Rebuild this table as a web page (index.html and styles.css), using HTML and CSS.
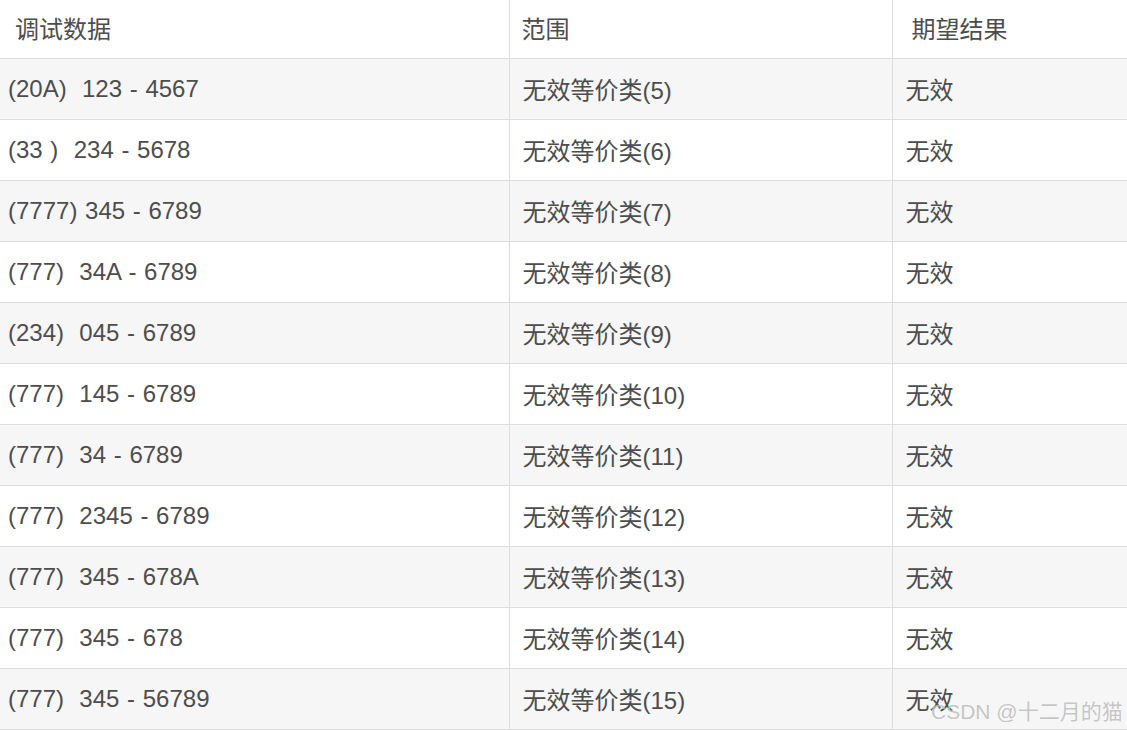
FILE: index.html
```html
<!DOCTYPE html>
<html lang="zh">
<head>
<meta charset="utf-8">
<link rel="stylesheet" href="styles.css">
</head>
<body>
<div class="wrap">
<table class="grid">
<colgroup><col class="c1"><col class="c2"><col class="c3"></colgroup>
<thead>
<tr><th class="h1">调试数据</th><th class="h2">范围</th><th class="h3">期望结果</th></tr>
</thead>
<tbody>
<tr><td class="d1">(20A)&nbsp; 123 - 4567</td><td>无效等价类(5)</td><td>无效</td></tr>
<tr><td class="d1">(33 )&nbsp; 234 - 5678</td><td>无效等价类(6)</td><td>无效</td></tr>
<tr><td class="d1">(7777) 345 - 6789</td><td>无效等价类(7)</td><td>无效</td></tr>
<tr><td class="d1">(777)&nbsp; 34A - 6789</td><td>无效等价类(8)</td><td>无效</td></tr>
<tr><td class="d1">(234)&nbsp; 045 - 6789</td><td>无效等价类(9)</td><td>无效</td></tr>
<tr><td class="d1">(777)&nbsp; 145 - 6789</td><td>无效等价类(10)</td><td>无效</td></tr>
<tr><td class="d1">(777)&nbsp; 34 - 6789</td><td>无效等价类(11)</td><td>无效</td></tr>
<tr><td class="d1">(777)&nbsp; 2345 - 6789</td><td>无效等价类(12)</td><td>无效</td></tr>
<tr><td class="d1">(777)&nbsp; 345 - 678A</td><td>无效等价类(13)</td><td>无效</td></tr>
<tr><td class="d1">(777)&nbsp; 345 - 678</td><td>无效等价类(14)</td><td>无效</td></tr>
<tr><td class="d1">(777)&nbsp; 345 - 56789</td><td>无效等价类(15)</td><td>无效</td></tr>
</tbody>
</table>
<div class="watermark">CSDN @十二月的猫</div>
</div>
</body>
</html>
```

FILE: styles.css
```css
html, body {
  margin: 0;
  padding: 0;
  background: #ffffff;
}
.wrap {
  position: relative;
  width: 1127px;
  height: 730px;
  overflow: hidden;
}
.grid {
  border-collapse: collapse;
  table-layout: fixed;
  width: 1140px;
  font-family: "Liberation Sans", Arial, "Noto Sans CJK SC", sans-serif;
  font-size: 24px;
  color: #4d4d4d;
}
.c1 { width: 509px; }
.c2 { width: 383px; }
.c3 { width: 248px; }
th, td {
  text-align: left;
  font-weight: normal;
  white-space: pre;
  padding: 0 0 0 13px;
  border-left: 1px solid #dddddd;
  border-bottom: 1px solid #dddddd;
  vertical-align: middle;
}
th:first-child, td:first-child {
  border-left: none;
}
th {
  height: 55px;
  padding-bottom: 3px;
}
td {
  height: 59px;
  padding-bottom: 1px;
}
.h1 { padding-left: 15px; }
.h2 { padding-left: 12px; }
.h3 { padding-left: 19px; }
.d1 { padding-left: 8px; word-spacing: 1px; }
tbody tr:nth-child(odd) td {
  background: #f6f6f6;
}
.watermark {
  position: absolute;
  left: 931px;
  top: 695px;
  font-family: "Liberation Sans", Arial, "Noto Sans CJK SC", sans-serif;
  font-size: 21px;
  color: rgba(150, 150, 150, 0.55);
  text-shadow: 0 0 1px rgba(255, 255, 255, 0.8);
  white-space: nowrap;
}
```
